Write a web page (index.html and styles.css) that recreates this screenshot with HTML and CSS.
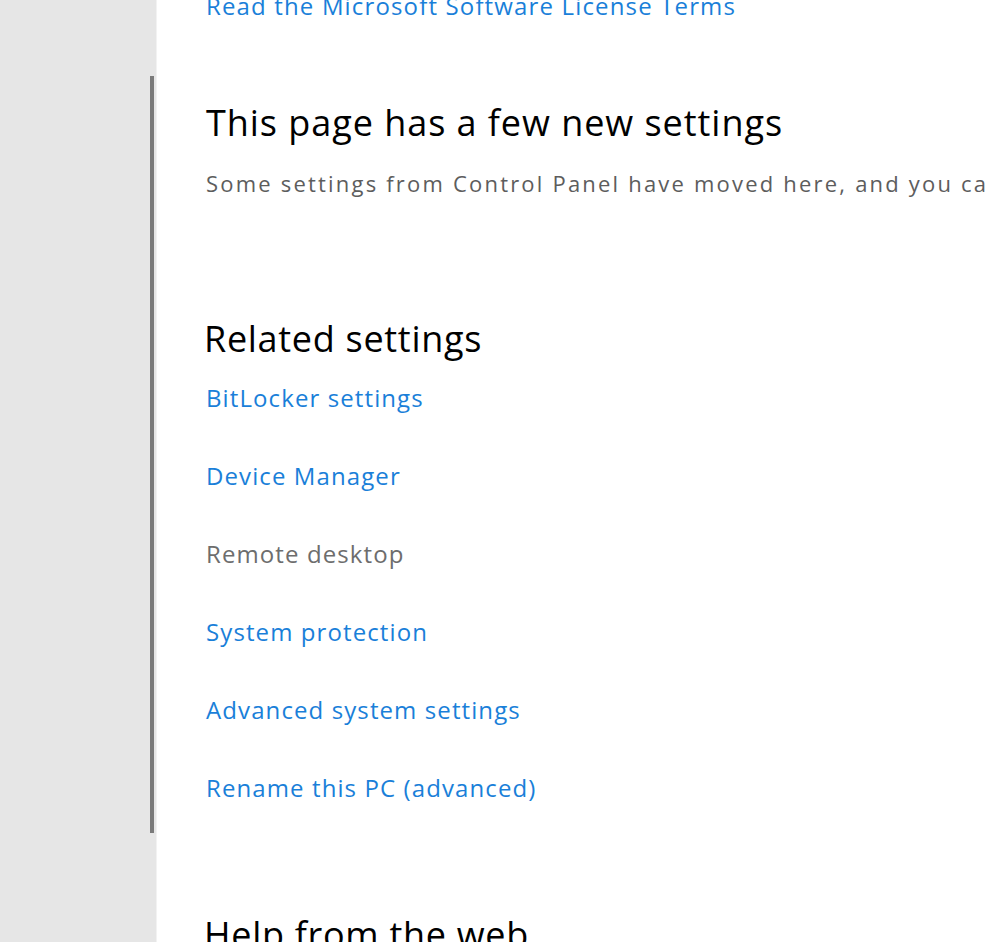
FILE: index.html
```html
<!DOCTYPE html>
<html lang="en">
<head>
<meta charset="utf-8">
<title>System - About</title>
<link rel="stylesheet" href="styles.css">
</head>
<body>
<div class="app">
  <aside class="sidebar">
    <div class="scroll-thumb"></div>
  </aside>
  <main class="content">
    <a class="link top-link" href="#">Read the Microsoft Software License Terms</a>
    <section class="block new-settings">
      <h2 class="title">This page has a few new settings</h2>
      <p class="desc">Some settings from Control Panel have moved here, and you can copy your PC info so it’s easier to share.</p>
    </section>
    <section class="block related">
      <h3 class="subtitle">Related settings</h3>
      <ul class="links">
        <li><a class="link" href="#">BitLocker settings</a></li>
        <li><a class="link" href="#">Device Manager</a></li>
        <li><span class="disabled">Remote desktop</span></li>
        <li><a class="link" href="#">System protection</a></li>
        <li><a class="link" href="#">Advanced system settings</a></li>
        <li><a class="link" href="#">Rename this PC (advanced)</a></li>
      </ul>
    </section>
    <section class="block help">
      <h3 class="subtitle">Help from the web</h3>
    </section>
  </main>
</div>
</body>
</html>
```

FILE: styles.css
```css
html, body {
  margin: 0;
  padding: 0;
  background: #ffffff;
}
body {
  font-family: "Open Sans", "Noto Sans", sans-serif;
  overflow: hidden;
}
.app {
  display: flex;
  height: 942px;
  overflow: hidden;
}
.sidebar {
  flex: 0 0 157px;
  background: #e6e6e6;
  border-right: 1px solid #f2f2f2;
  box-sizing: border-box;
  display: flex;
  padding-left: 150px;
}
.scroll-thumb {
  width: 4px;
  height: 757px;
  margin-top: 76px;
  background: #7a7a7a;
}
.content {
  flex: 1;
  min-width: 0;
  padding-left: 49px;
  white-space: nowrap;
  overflow: hidden;
  display: flex;
  flex-direction: column;
  align-items: flex-start;
}
.block {
  display: flex;
  flex-direction: column;
  align-items: flex-start;
}
.link {
  color: #1a7fd9;
  text-decoration: none;
}
.top-link {
  font-size: 24px;
  line-height: 30px;
  letter-spacing: 1.15px;
  margin-top: -9px;
}
.title {
  font-weight: 400;
  font-size: 36px;
  line-height: 48px;
  letter-spacing: 0.95px;
  margin: 78px 0 0 0;
  color: #000;
}
.desc {
  font-size: 22px;
  line-height: 30px;
  letter-spacing: 2.2px;
  color: #5d5d5d;
  margin: 21px 0 0 0;
}
.subtitle {
  font-weight: 400;
  font-size: 36px;
  line-height: 48px;
  letter-spacing: 0.7px;
  margin: 0 0 0 -2px;
  color: #000;
}
.related {
  margin-top: 117px;
}
.links {
  list-style: none;
  margin: 20px 0 0 0;
  padding: 0;
  display: flex;
  flex-direction: column;
  gap: 48px;
  font-size: 24px;
  line-height: 30px;
  letter-spacing: 1.1px;
}
.disabled {
  color: #6d6d6d;
}
.help {
  margin-top: 108px;
}
```
